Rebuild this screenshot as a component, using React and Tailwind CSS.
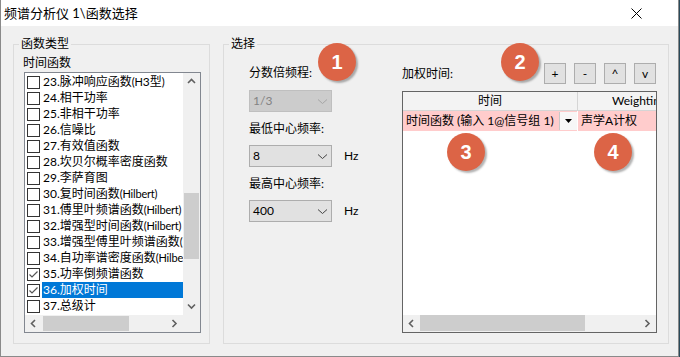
import React from "react";

const items = [
  { label: "23.脉冲响应函数(H3型)" },
  { label: "24.相干功率" },
  { label: "25.非相干功率" },
  { label: "26.信噪比" },
  { label: "27.有效值函数" },
  { label: "28.坎贝尔概率密度函数" },
  { label: "29.李萨育图" },
  { label: "30.复时间函数(Hilbert)" },
  { label: "31.傅里叶频谱函数(Hilbert)" },
  { label: "32.增强型时间函数(Hilbert)" },
  { label: "33.增强型傅里叶频谱函数(Hilbert)" },
  { label: "34.自功率谱密度函数(Hilbert)" },
  { label: "35.功率倒频谱函数", checked: true },
  { label: "36.加权时间", checked: true, selected: true },
  { label: "37.总级计" },
];

// Latin runs render a bit narrower, like the dialog font does
function Label({ text }) {
  return text.split(/([()A-Za-z]+)/).map((part, i) =>
    /^[()A-Za-z]+$/.test(part) ? (
      <span key={i} className="text-[11px] tracking-[-0.2px]">
        {part}
      </span>
    ) : (
      <span key={i}>{part}</span>
    )
  );
}

function Chevron({ dir = "down", color = "#606060" }) {
  const pts = {
    up: "1,5 4.5,1.5 8,5",
    down: "1,1.5 4.5,5 8,1.5",
    left: "5,1 1.5,4.5 5,8",
    right: "1.5,1 5,4.5 1.5,8",
  }[dir];
  const w = dir === "up" || dir === "down" ? 9 : 7;
  const h = dir === "up" || dir === "down" ? 7 : 9;
  return (
    <svg width={w} height={h} viewBox={`0 0 ${w} ${h}`}>
      <polyline points={pts} fill="none" stroke={color} strokeWidth="1.6" />
    </svg>
  );
}

function CheckBox({ checked }) {
  return (
    <svg width="13" height="13" viewBox="0 0 13 13" className="shrink-0">
      <rect x="0.5" y="0.5" width="12" height="12" fill="#fff" stroke="#333" />
      {checked && (
        <polyline points="2.5,6.5 5,9 10.5,3.5" fill="none" stroke="#555" strokeWidth="1.2" />
      )}
    </svg>
  );
}

function Select({ value, disabled }) {
  return (
    <div
      className={`w-[83px] h-[22px] flex items-center justify-between pl-[3px] pr-[3px] border ${
        disabled ? "bg-[#cccccc] border-[#bfbfbf] text-[#838383]" : "bg-[#e1e1e1] border-[#adadad] text-black"
      }`}
    >
      <span>{value}</span>
      <svg width="11" height="7" viewBox="0 0 11 7">
        <polyline points="1,1.5 5.5,5.5 10,1.5" fill="none" stroke={disabled ? "#a6a6a6" : "#444"} strokeWidth="1" />
      </svg>
    </div>
  );
}

function Badge({ n, className }) {
  return (
    <div
      className={`absolute w-[38px] h-[38px] rounded-full bg-[#dc6446] shadow-[2px_2px_2px_rgba(0,0,0,0.3)] flex items-center justify-center text-white text-[20px] font-bold font-['Liberation_Sans',sans-serif] ${className}`}
    >
      {n}
    </div>
  );
}

function SmallButton({ children }) {
  return (
    <div className="w-[22px] h-[21px] bg-[#e1e1e1] border border-[#adadad] flex items-center justify-center text-[12px] leading-none">
      {children}
    </div>
  );
}

export default function App() {
  return (
    <div className="w-[680px] h-[357px] bg-[#2a4a5a]">
      <div className="relative w-[679px] h-[357px] flex flex-col bg-[#f0f0f0] border-x border-b border-[#8a8a8a] text-[12px] leading-[16px] text-black font-['Lato','Noto_Sans_CJK_SC',sans-serif] overflow-hidden">
        {/* Title bar */}
        <div className="h-[26px] shrink-0 bg-white flex items-center justify-between pl-[3px] pr-[36px]">
          <span className="text-[13px]">频谱分析仪 1\函数选择</span>
          <svg width="11" height="11" viewBox="0 0 11 11">
            <path d="M0.5 0.5 L10.5 10.5 M10.5 0.5 L0.5 10.5" stroke="#000" strokeWidth="1" />
          </svg>
        </div>

        {/* Body */}
        <div className="flex-1 flex pl-[12px] pt-[10px]">
          {/* 函数类型 */}
          <fieldset className="w-[197px] h-[308px] border border-[#dcdcdc]">
            <legend className="ml-[5px] px-[2px] leading-[16px]">函数类型</legend>
            <div className="pl-[9px] pt-[3px]">
              <div className="h-[16px]">时间函数</div>
              <div className="mt-[1px] ml-[1px] w-[177px] h-[261px] border border-[#828790] bg-white flex flex-col">
                <div className="flex h-[242px]">
                  <div className="w-[158px] pt-[1px] overflow-hidden">
                    {items.map((it) => (
                      <div key={it.label} className="h-[16px] flex items-center pl-[2px]">
                        <CheckBox checked={it.checked} />
                        <div
                          className={`ml-[2px] flex-1 h-[16px] pl-[1px] whitespace-nowrap overflow-hidden ${
                            it.selected ? "bg-[#0078d7] text-white" : ""
                          }`}
                        >
                          <Label text={it.label} />
                        </div>
                      </div>
                    ))}
                  </div>
                  <div className="w-[17px] bg-[#f0f0f0] flex flex-col">
                    <div className="h-[17px] flex items-center justify-center">
                      <Chevron dir="up" />
                    </div>
                    <div className="h-[103px]" />
                    <div className="h-[66px] mx-[1px] bg-[#cdcdcd]" />
                    <div className="flex-1" />
                    <div className="h-[17px] flex items-center justify-center">
                      <Chevron dir="down" />
                    </div>
                  </div>
                </div>
                <div className="flex h-[17px] bg-[#f0f0f0]">
                  <div className="w-[17px] flex items-center justify-center">
                    <Chevron dir="left" />
                  </div>
                  <div className="w-[86px] ml-[1px] my-[1px] bg-[#cdcdcd]" />
                  <div className="flex-1" />
                  <div className="w-[17px] flex items-center justify-center">
                    <Chevron dir="right" />
                  </div>
                  <div className="w-[17px]" />
                </div>
              </div>
            </div>
          </fieldset>

          {/* 选择 */}
          <fieldset className="ml-[13px] w-[446px] h-[308px] border border-[#dcdcdc]">
            <legend className="ml-[5px] px-[2px] leading-[16px]">选择</legend>
            <div className="flex pl-[25px] pt-[11px]">
              <div className="w-[153px] pt-[2px]">
                <div className="h-[16px]">分数倍频程:</div>
                <div className="mt-[9px]">
                  <Select value="1/3" disabled />
                </div>
                <div className="mt-[9px] h-[16px]">最低中心频率:</div>
                <div className="mt-[8px] flex items-center">
                  <Select value="8" />
                  <span className="ml-[12px]">Hz</span>
                </div>
                <div className="mt-[9px] h-[16px]">最高中心频率:</div>
                <div className="mt-[8px] flex items-center">
                  <Select value="400" />
                  <span className="ml-[12px]">Hz</span>
                </div>
              </div>

              <div className="w-[255px]">
                <div className="h-[21px] flex items-center justify-between pr-[1px]">
                  <span>加权时间:</span>
                  <div className="flex gap-[8px]">
                    <SmallButton>+</SmallButton>
                    <SmallButton>-</SmallButton>
                    <SmallButton>^</SmallButton>
                    <SmallButton>v</SmallButton>
                  </div>
                </div>
                <div className="mt-[7px] w-[255px] h-[242px] border border-[#646464] bg-white flex flex-col">
                  <div className="h-[19px] flex border-b border-[#d5d5d5] bg-[#f3f3f3]">
                    <div className="w-[175px] border-r border-[#d5d5d5] flex items-center justify-center">时间</div>
                    <div className="flex-1 overflow-hidden whitespace-nowrap pl-[34px] flex items-center">Weighting</div>
                  </div>
                  <div className="h-[20px] flex bg-[#ffcccc]">
                    <div className="w-[175px] flex items-center pl-[3px] border-r border-white">
                      <span className="flex-1 whitespace-nowrap overflow-hidden">时间函数 (输入 1@信号组 1)</span>
                      <div className="w-[18px] h-[18px] bg-[#f7f7f7] border-l border-[#c8c8c8] flex items-center justify-center">
                        <svg width="7" height="4" viewBox="0 0 7 4">
                          <polygon points="0,0 7,0 3.5,4" fill="#000" />
                        </svg>
                      </div>
                    </div>
                    <div className="flex-1 flex items-center pl-[3px] whitespace-nowrap overflow-hidden">声学A计权</div>
                  </div>
                  <div className="flex-1" />
                  <div className="h-[17px] flex bg-[#f0f0f0]">
                    <div className="w-[17px] flex items-center justify-center">
                      <Chevron dir="left" />
                    </div>
                    <div className="w-[165px] mb-[1px] bg-[#cdcdcd]" />
                    <div className="flex-1" />
                    <div className="w-[17px] flex items-center justify-center">
                      <Chevron dir="right" />
                    </div>
                  </div>
                </div>
              </div>
            </div>
          </fieldset>
        </div>

        <Badge n="1" className="left-[317px] top-[43px]" />
        <Badge n="2" className="left-[500px] top-[43px]" />
        <Badge n="3" className="left-[446px] top-[133px]" />
        <Badge n="4" className="left-[593px] top-[133px]" />
      </div>
    </div>
  );
}
